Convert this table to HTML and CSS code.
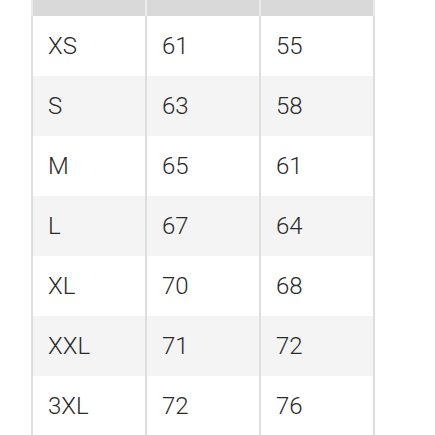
FILE: index.html
```html
<!DOCTYPE html>
<html>
<head>
<meta charset="utf-8">
<link rel="stylesheet" href="styles.css">
</head>
<body>
<div class="table">
  <div class="row head"><div class="cell"></div><div class="cell"></div><div class="cell"></div></div>
  <div class="row"><div class="cell">XS</div><div class="cell">61</div><div class="cell">55</div></div>
  <div class="row alt"><div class="cell">S</div><div class="cell">63</div><div class="cell">58</div></div>
  <div class="row"><div class="cell">M</div><div class="cell">65</div><div class="cell">61</div></div>
  <div class="row alt"><div class="cell">L</div><div class="cell">67</div><div class="cell">64</div></div>
  <div class="row"><div class="cell">XL</div><div class="cell">70</div><div class="cell">68</div></div>
  <div class="row alt"><div class="cell">XXL</div><div class="cell">71</div><div class="cell">72</div></div>
  <div class="row"><div class="cell">3XL</div><div class="cell">72</div><div class="cell">76</div></div>
</div>
</body>
</html>
```
FILE: styles.css
```css
html, body {
  margin: 0;
  padding: 0;
  background: #ffffff;
  overflow: hidden;
}
.table {
  margin-left: 31px;
  width: 344px;
  font-family: Roboto, "Liberation Sans", sans-serif;
  font-size: 24px;
  font-weight: 300;
  color: #2a2a2a;
}
.row {
  display: grid;
  grid-template-columns: 114px 114px 116px;
  height: 60px;
  background: #ffffff;
}
.row.alt {
  background: #f4f4f4;
}
.row.head {
  height: 16px;
  background: #d9d9d9;
}
.cell {
  display: flex;
  align-items: center;
  padding-left: 15px;
  border-left: 2px solid #dedede;
}
.cell:last-child {
  border-right: 2px solid #dedede;
}
.head .cell {
  border-color: #eaeaea;
}
```
